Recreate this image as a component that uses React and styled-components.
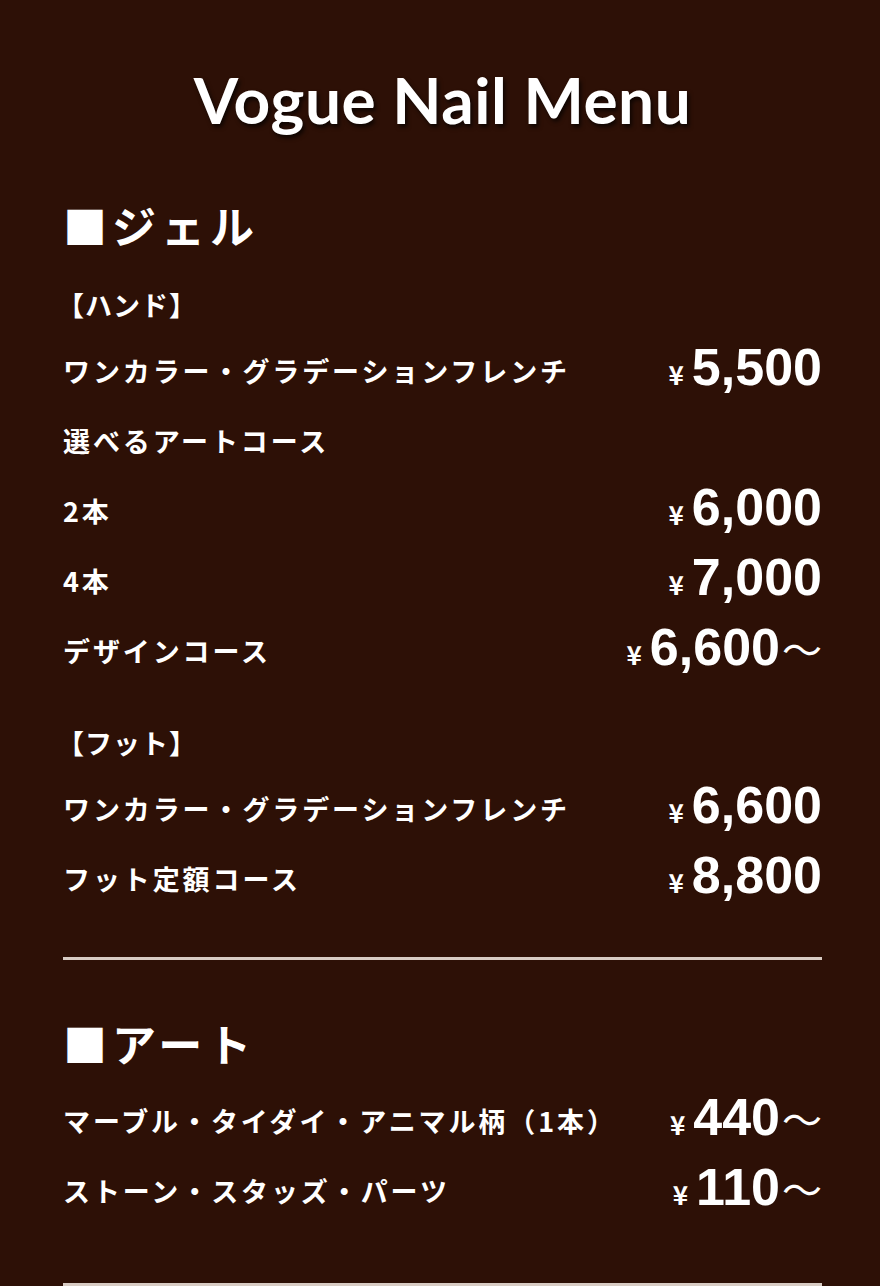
import React from "react";
import styled, { createGlobalStyle } from "styled-components";

const GlobalStyle = createGlobalStyle`
  html, body {
    margin: 0;
    padding: 0;
    background: #2d1006;
  }
  body {
    font-family: "Noto Sans CJK JP", "Noto Sans", sans-serif;
    color: #ffffff;
  }
`;

const gel = {
  hand: [
    { name: "ワンカラー・グラデーションフレンチ", price: "5,500" },
    { name: "選べるアートコース" },
    { name: "2本", price: "6,000" },
    { name: "4本", price: "7,000" },
    { name: "デザインコース", price: "6,600", from: true },
  ],
  foot: [
    { name: "ワンカラー・グラデーションフレンチ", price: "6,600" },
    { name: "フット定額コース", price: "8,800" },
  ],
};

const art = [
  { name: "マーブル・タイダイ・アニマル柄（1本）", price: "440", from: true },
  { name: "ストーン・スタッズ・パーツ", price: "110", from: true },
];

function MenuRow({ item }) {
  return (
    <Row>
      <Label>{item.name}</Label>
      {item.price && (
        <Price>
          <Yen>¥</Yen>
          <Amount>{item.price}</Amount>
          {item.from && <Tilde>～</Tilde>}
        </Price>
      )}
    </Row>
  );
}

export default function App() {
  return (
    <Page>
      <GlobalStyle />
      <Title>Vogue Nail Menu</Title>

      <Heading>■ジェル</Heading>
      <SubHeading>【ハンド】</SubHeading>
      {gel.hand.map((item, i) => (
        <MenuRow key={i} item={item} />
      ))}
      <SubHeading $gap>【フット】</SubHeading>
      {gel.foot.map((item, i) => (
        <MenuRow key={i} item={item} />
      ))}

      <Divider />

      <Heading $after>■アート</Heading>
      <ArtList>
        {art.map((item, i) => (
          <MenuRow key={i} item={item} />
        ))}
      </ArtList>

      <Divider $thick />
    </Page>
  );
}

const Page = styled.main`
  width: 880px;
  min-height: 1286px;
  box-sizing: border-box;
  padding: 60px 58px 0 63px;
  background: #2d1006;
  overflow: hidden;
`;

const Title = styled.h1`
  margin: 0 0 55px;
  line-height: 80px;
  text-align: center;
  font-family: "Lato", "Noto Sans", sans-serif;
  font-weight: 700;
  font-size: 64px;
  letter-spacing: 0.5px;
  text-shadow: 2px 3px 4px rgba(0, 0, 0, 0.7);
`;

const Heading = styled.h2`
  margin: ${(p) => (p.$after ? "53px 0 0" : "0 0 20px")};
  line-height: 60px;
  font-size: 44px;
  font-weight: 700;
  letter-spacing: 5px;
`;

const SubHeading = styled.h3`
  margin: ${(p) => (p.$gap ? "28px 0 0" : "0")};
  margin-left: -6px;
  line-height: 60px;
  font-size: 27px;
  font-weight: 700;
  letter-spacing: 1px;
`;

const ArtList = styled.div`
  margin-top: 12px;
`;

const Row = styled.div`
  height: 70px;
  display: flex;
  align-items: center;
  justify-content: space-between;
`;

const Label = styled.span`
  font-size: 27px;
  font-weight: 700;
  letter-spacing: 2.9px;
  white-space: nowrap;
`;

const Price = styled.span`
  display: flex;
  align-items: baseline;
  line-height: 1;
  margin-top: -6px;
`;

const Yen = styled.span`
  font-size: 26px;
  font-weight: 700;
  margin-right: 8px;
`;

const Amount = styled.span`
  font-family: "Liberation Sans", Arial, sans-serif;
  font-size: 52px;
  font-weight: 700;
`;

const Tilde = styled.span`
  font-size: 40px;
  font-weight: 400;
  margin-left: 2px;
`;

const Divider = styled.hr`
  margin: ${(p) => (p.$thick ? "58px 0 0" : "44px 0 0")};
  border: 0;
  height: ${(p) => (p.$thick ? "4px" : "3px")};
  background: #d8ccc4;
`;
